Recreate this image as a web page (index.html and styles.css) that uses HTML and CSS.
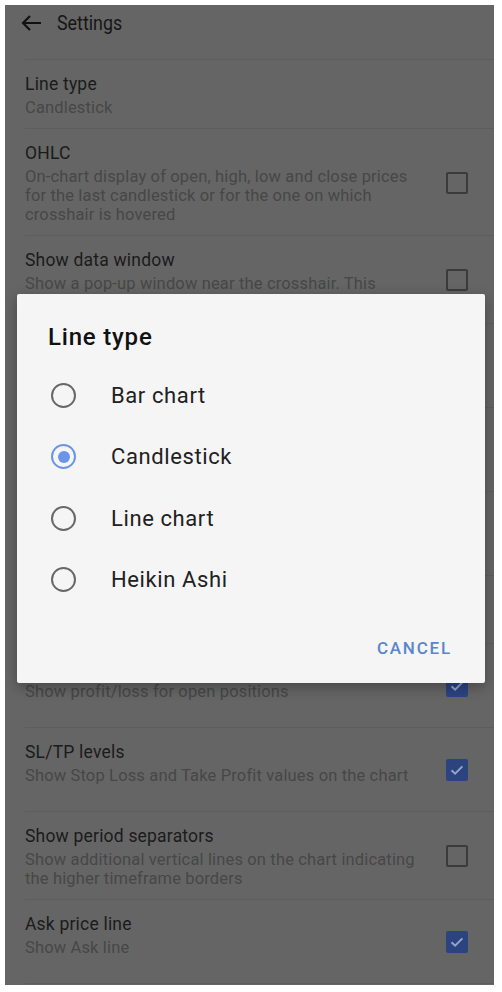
FILE: index.html
```html
<!DOCTYPE html>
<html lang="en">

<head>
    <meta charset="UTF-8">
    <meta name="viewport" content="width=device-width, initial-scale=1.0">
    <title>Settings</title>
    <link rel="stylesheet" href="styles.css">
</head>

<body>
    <div class="screen">
        <div class="header">
            <svg class="back" width="22" height="18" viewBox="0 0 22 18">
                <path d="M21 9H3M10 2L3 9l7 7" fill="none" stroke="#111" stroke-width="2.2" />
            </svg>
            <span class="header-title">Settings</span>
        </div>

        <div class="list">
            <div class="item plain">
                <div class="text">
                    <div class="title">Line type</div>
                    <div class="summary">Candlestick</div>
                </div>
            </div>
            <div class="item">
                <div class="text">
                    <div class="title">OHLC</div>
                    <div class="summary">On-chart display of open, high, low and close prices for the last candlestick or for the one on which crosshair is hovered</div>
                </div>
                <span class="check"></span>
            </div>
            <div class="item">
                <div class="text">
                    <div class="title">Show data window</div>
                    <div class="summary">Show a pop-up window near the crosshair. This window displays the bar values</div>
                </div>
                <span class="check"></span>
            </div>
            <div class="item">
                <div class="text">
                    <div class="title">Show volumes</div>
                    <div class="summary">Show tick volumes on the chart</div>
                </div>
                <span class="check"></span>
            </div>
            <div class="item">
                <div class="text">
                    <div class="title">Trade levels</div>
                    <div class="summary">Show open positions and orders</div>
                </div>
                <span class="check checked"></span>
            </div>
            <div class="item">
                <div class="text">
                    <div class="title">Show trade history</div>
                    <div class="summary">Show deals on the chart</div>
                </div>
                <span class="check"></span>
            </div>
            <div class="item plain short">
                <div class="text">
                    <div class="title">Color scheme</div>
                    <div class="summary">Black on white</div>
                </div>
            </div>
            <div class="item">
                <div class="text">
                    <div class="title">Profit/loss</div>
                    <div class="summary">Show profit/loss for open positions</div>
                </div>
                <span class="check checked"></span>
            </div>
            <div class="item">
                <div class="text">
                    <div class="title">SL/TP levels</div>
                    <div class="summary">Show Stop Loss and Take Profit values on the chart</div>
                </div>
                <span class="check checked"></span>
            </div>
            <div class="item">
                <div class="text">
                    <div class="title">Show period separators</div>
                    <div class="summary">Show additional vertical lines on the chart indicating the higher timeframe borders</div>
                </div>
                <span class="check"></span>
            </div>
            <div class="item">
                <div class="text">
                    <div class="title">Ask price line</div>
                    <div class="summary">Show Ask line</div>
                </div>
                <span class="check checked"></span>
            </div>
        </div>

        <!-- line type picker -->
        <div class="dialog">
            <div class="dialog-title">Line type</div>
            <div class="options">
                <div class="option"><span class="radio"></span>Bar chart</div>
                <div class="option"><span class="radio on"></span>Candlestick</div>
                <div class="option"><span class="radio"></span>Line chart</div>
                <div class="option"><span class="radio"></span>Heikin Ashi</div>
            </div>
            <div class="actions">
                <button class="cancel-btn">Cancel</button>
            </div>
        </div>
    </div>
</body>

</html>
```

FILE: styles.css
```css
* {
    margin: 0;
    padding: 0;
    box-sizing: border-box;
}

body {
    font-family: Roboto, "Noto Sans", sans-serif;
    background: #fff;
    padding: 5px 8px 7px 5px;
}

.screen {
    position: relative;
    height: 980px;
    background: #656565;
    overflow: hidden;
}

.header {
    display: flex;
    align-items: center;
    height: 36px;
    margin-bottom: 18px;
    padding-left: 15px;
}

.back {
    display: block;
}

.header-title {
    display: inline-block;
    margin-left: 15px;
    font-size: 21px;
    color: #161616;
    transform: scaleX(0.85);
    transform-origin: left center;
}

.list {
    border-top: 1px solid #5d5d5d;
    margin-left: 20px;
}

.item {
    display: flex;
    align-items: center;
    min-height: 84px;
    padding: 12px 26px 11px 0;
    border-bottom: 1px solid #5d5d5d;
}

.item.plain {
    min-height: 0;
}

.item.short {
    padding-bottom: 10px;
}

.text {
    flex: 1;
    align-self: flex-start;
    padding-right: 20px;
}

.title {
    font-size: 17.5px;
    line-height: 24px;
    letter-spacing: 0.2px;
    color: #1b1b1b;
}

.summary {
    margin-top: 2px;
    font-size: 16.5px;
    line-height: 19px;
    letter-spacing: 0.15px;
    color: #474747;
}

.check {
    flex: none;
    width: 22px;
    height: 22px;
    border: 2px solid #3b3b3b;
    border-radius: 2px;
}

.check.checked {
    border-color: #2b4480;
    background: #2b4480 url("data:image/svg+xml,%3Csvg xmlns='http://www.w3.org/2000/svg' viewBox='0 0 18 18'%3E%3Cpath d='M3.5 9.2l3.6 3.5 7.3-7.3' fill='none' stroke='%2394a3c8' stroke-width='2'/%3E%3C/svg%3E") center / 18px 18px no-repeat;
}

.dialog {
    position: absolute;
    left: 12px;
    top: 289px;
    width: 468px;
    height: 389px;
    background: #f5f5f5;
    border-radius: 2px;
    box-shadow: 0 4px 14px rgba(0, 0, 0, 0.3);
    padding-top: 29px;
}

.dialog-title {
    padding-left: 31px;
    font-size: 24px;
    font-weight: 500;
    line-height: 28px;
    letter-spacing: 0.8px;
    color: #111;
}

.options {
    margin-top: 13.5px;
}

.option {
    display: flex;
    align-items: center;
    height: 61.5px;
    padding-left: 34px;
    font-size: 22px;
    letter-spacing: 0.6px;
    color: #212121;
}

.radio {
    position: relative;
    width: 25px;
    height: 25px;
    border: 2px solid #686868;
    border-radius: 50%;
    margin-right: 35px;
}

.radio.on {
    border-color: #6b95e6;
}

.radio.on::after {
    content: "";
    position: absolute;
    left: 4.5px;
    top: 4.5px;
    width: 12px;
    height: 12px;
    border-radius: 50%;
    background: #6b95e6;
}

.actions {
    display: flex;
    justify-content: flex-end;
    padding: 19px 33px 20px 0;
}

.cancel-btn {
    border: none;
    background: none;
    font-family: Roboto, sans-serif;
    font-size: 17px;
    font-weight: 500;
    line-height: 36px;
    letter-spacing: 1.8px;
    text-transform: uppercase;
    color: #5b86ca;
    cursor: pointer;
}
```
